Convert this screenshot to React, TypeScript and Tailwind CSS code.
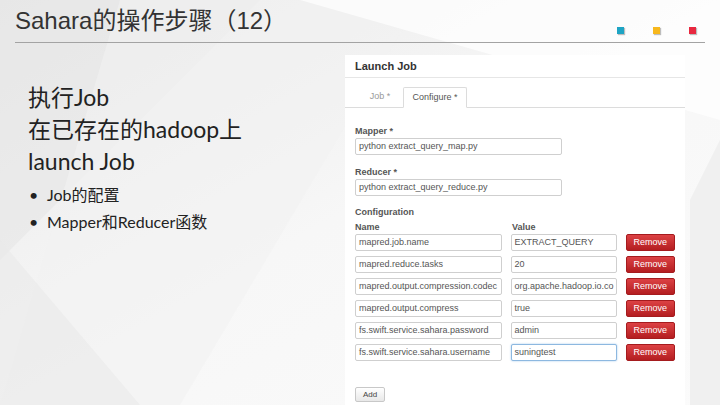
import React from "react";

const rows = [
  { name: "mapred.job.name", value: "EXTRACT_QUERY" },
  { name: "mapred.reduce.tasks", value: "20" },
  { name: "mapred.output.compression.codec", value: "org.apache.hadoop.io.co" },
  { name: "mapred.output.compress", value: "true" },
  { name: "fs.swift.service.sahara.password", value: "admin" },
  { name: "fs.swift.service.sahara.username", value: "suningtest", focus: true },
];

function Field({ value, className = "", focus = false }: { value: string; className?: string; focus?: boolean }) {
  return (
    <div
      className={`h-[17px] flex items-center px-[3px] bg-white border rounded-[2px] overflow-hidden whitespace-nowrap text-[9px] text-[#555] ${
        focus ? "border-[#8db8e0] shadow-[0_0_2px_#9cc4ea]" : "border-[#cfcfcf]"
      } ${className}`}
    >
      {value}
    </div>
  );
}

function Backdrop() {
  // faceted light background of the slide
  return (
    <svg className="absolute inset-0 w-full h-full" viewBox="0 0 720 405" preserveAspectRatio="none" aria-hidden="true">
      <polygon points="0,0 260,0 0,260" fill="#e6e6e6" opacity="0.6" />
      <polygon points="120,0 420,0 180,405 0,405" fill="#f1f1f1" opacity="0.6" />
      <polygon points="300,0 720,0 720,120" fill="#ffffff" opacity="0.7" />
      <polygon points="0,240 140,405 0,405" fill="#e9e9e9" opacity="0.6" />
      <polygon points="690,200 720,140 720,405 690,405" fill="#f0f0f0" />
    </svg>
  );
}

export default function App() {
  return (
    <div
      className="relative w-[720px] h-[405px] overflow-hidden bg-gradient-to-br from-[#e9e9e9] via-[#f7f7f7] to-[#fbfbfb]"
      style={{ fontFamily: '"Liberation Sans", "Noto Sans CJK SC", sans-serif' }}
    >
      <Backdrop />

      <div className="relative">
        {/* 标题 */}
        <div className="flex items-end justify-between h-[43px] mx-[15px] border-b border-[#a3a3a3]">
          <h1 className="text-[24px] leading-none pb-[9px] text-[#333]">Sahara的操作步骤（12）</h1>
          <div className="flex items-center gap-[29px] pb-[8px] pr-[9px]">
            <span className="w-[7px] h-[7px] bg-[#1ea4c4] shadow-[1px_1px_1px_rgba(0,0,0,0.25)]" />
            <span className="w-[7px] h-[7px] bg-[#f7b81d] shadow-[1px_1px_1px_rgba(0,0,0,0.25)]" />
            <span className="w-[7px] h-[7px] bg-[#e8283f] shadow-[1px_1px_1px_rgba(0,0,0,0.25)]" />
          </div>
        </div>

        <div className="flex">
          {/* 左侧文字 */}
          <div
            className="w-[345px] pl-[28px] pt-[38px] text-[#222]"
            style={{ fontFamily: 'Lato, "Noto Sans CJK SC", sans-serif' }}
          >
            <p className="text-[23px] leading-[32px]">执行Job</p>
            <p className="text-[23px] leading-[32px]">在已存在的hadoop上</p>
            <p className="text-[23px] leading-[32px]">launch Job</p>
            <ul className="mt-[4px] text-[16px] leading-[27px]">
              <li className="flex">
                <span className="w-[19px] pl-[1px]">•</span>Job的配置
              </li>
              <li className="flex">
                <span className="w-[19px] pl-[1px]">•</span>Mapper和Reducer函数
              </li>
            </ul>
          </div>

          {/* Launch Job 面板 */}
          <div className="mt-[12px] w-[340px] h-[350px] bg-white text-[#333]">
            <div className="h-[23px] flex items-center px-[10px] border-b border-[#e6e6e6] text-[11px] font-bold">
              Launch Job
            </div>
            <div className="mt-[10px] flex items-end h-[20px] pl-[12px] border-b border-[#dcdcdc] text-[9px]">
              <div className="w-[46px] h-[20px] flex items-center justify-center text-[#999]">Job *</div>
              <div className="w-[64px] h-[21px] flex items-center justify-center -mb-px bg-white border border-[#dcdcdc] border-b-white rounded-t-[2px] text-[#555]">
                Configure *
              </div>
            </div>

            <div className="px-[10px]">
              <div className="mt-[17px] h-[12px] text-[9px] font-bold text-[#555]">Mapper *</div>
              <Field value="python extract_query_map.py" className="mt-[1px] w-[207px]" />
              <div className="mt-[11px] h-[12px] text-[9px] font-bold text-[#555]">Reducer *</div>
              <Field value="python extract_query_reduce.py" className="mt-[1px] w-[207px]" />

              <div className="mt-[10px] h-[12px] text-[9px] font-bold text-[#555]">Configuration</div>
              <div className="mt-[3px] flex h-[12px] text-[9px] font-bold text-[#555]">
                <span className="w-[157px]">Name</span>
                <span>Value</span>
              </div>

              <div className="mt-[1px] flex flex-col gap-[5px]">
                {rows.map((r) => (
                  <div key={r.name} className="flex items-center h-[17px]">
                    <Field value={r.name} className="w-[148px]" />
                    <Field value={r.value} focus={r.focus} className="ml-[9px] w-[107px]" />
                    <button
                      type="button"
                      className="ml-[9px] w-[50px] h-[17px] rounded-[2px] bg-gradient-to-b from-[#dc4144] to-[#b41d20] border border-[#a51b1e] text-white text-[9px]"
                    >
                      Remove
                    </button>
                  </div>
                ))}
              </div>

              <button
                type="button"
                className="mt-[26px] w-[30px] h-[15px] rounded-[2px] border border-[#c8c8c8] bg-gradient-to-b from-white to-[#e8e8e8] text-[8px] text-[#444]"
              >
                Add
              </button>
            </div>
          </div>
        </div>
      </div>
    </div>
  );
}
